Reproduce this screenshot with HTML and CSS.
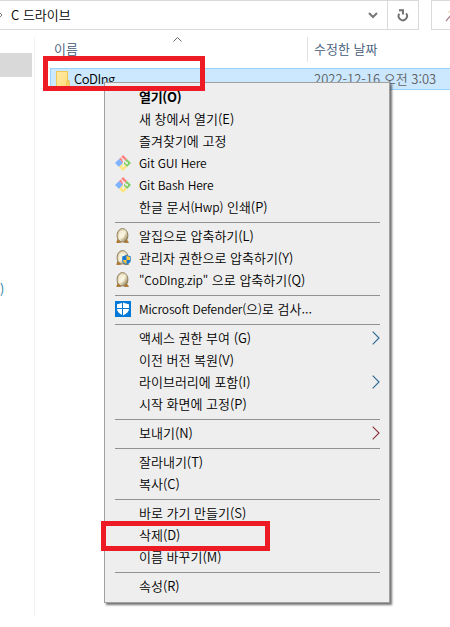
FILE: index.html
```html
<!DOCTYPE html>
<html lang="ko">
<head>
<meta charset="utf-8">
<title>C 드라이브</title>
<link rel="stylesheet" href="styles.css">
</head>
<body>
<svg class="defs" width="0" height="0">
  <defs>
    <linearGradient id="shell" x1="0" y1="0" x2="1" y2="1">
      <stop offset="0" stop-color="#c9b98f"/><stop offset=".5" stop-color="#f4ecd0"/><stop offset="1" stop-color="#7e6838"/>
    </linearGradient>
    <linearGradient id="paper" x1="0" y1="0" x2="1" y2="1">
      <stop offset="0" stop-color="#ffeba6"/><stop offset="1" stop-color="#ffdc78"/>
    </linearGradient>
    <symbol id="git" viewBox="0 0 16 16">
      <path d="M8 0l4 4-4 4-4-4z" fill="#ff8080"/>
      <path d="M12 4l4 4-4 4-4-4z" fill="#80cf63"/>
      <path d="M4 4l4 4-4 4-4-4z" fill="#80b3ff"/>
      <path d="M8 8l4 4-4 4-4-4z" fill="#ffe680"/>
      <path d="M5.500 1.800l3 3V11M8.500 5l3 3" stroke="#eee" stroke-width="1.100" fill="none"/>
      <circle cx="8.400" cy="5" r="1.100" fill="#eee"/><circle cx="11.800" cy="8" r="1.200" fill="#eee"/><circle cx="8.200" cy="11" r="1.200" fill="#eee"/>
    </symbol>
    <symbol id="egg" viewBox="0 0 16 16">
      <path d="M3 11l-1.300 3.500h4zM11 11l2.500 3.500h-4z" fill="#c87a18" stroke="#8c5a1e" stroke-width=".6"/>
      <path d="M7.500.6C10.700.6 12.900 4 12.900 7.500s-2 6.500-5.400 6.500-5.400-3-5.400-6.500S4.300.6 7.500.6z" fill="url(#shell)" stroke="#75643f" stroke-width=".8"/>
      <ellipse cx="6.800" cy="6.500" rx="3" ry="4" fill="#fffdf0" opacity=".55"/>
    </symbol>
    <symbol id="badge" viewBox="0 0 9 10">
      <path d="M4.500 0l4.300 1.500v3.500q0 3-4.300 4.800Q.2 8 .2 5V1.500z" fill="#1b78d0"/>
      <path d="M4.500 .8v4.200H8.200V2.200zM4.500 5H.8Q1.200 7.500 4.500 9.200z" fill="#ffc83a"/>
    </symbol>
    <symbol id="defender" viewBox="0 0 16 16">
      <path d="M0 0h16v16H0z" fill="#0078d7"/>
      <path d="M8 1.600q2.700 1.400 6 1.600v4.500q0 4.200-6 6.700-6-2.500-6-6.700V3.200q3.300-.2 6-1.600z" fill="#fff"/>
      <path d="M7.500 1v14M1.500 7.500h13" stroke="#0078d7"/>
    </symbol>
  </defs>
</svg>
<div class="window">
  <div class="toolbar">
    <div class="address">
      <svg class="crumb" width="3" height="8" viewBox="0 0 3 8"><path d="M-1 1l3 3-3 3" fill="none" stroke="#777"/></svg>
      <span class="path">C 드라이브</span>
      <svg class="drop" width="10" height="7" viewBox="0 0 10 7"><path d="M1 1l4 4 4-4" fill="none" stroke="#777" stroke-width="2"/></svg>
      <div class="refresh"><svg width="12" height="13" viewBox="0 0 12 13"><path d="M2.300 4.800A4.200 4.200 0 1 0 9 4.300M2 1.300h4v4.200" fill="none" stroke="#707070" stroke-width="1.900"/></svg></div>
    </div>
    <div class="search"><svg width="12" height="14" viewBox="0 0 12 14"><path d="M1 12l5-6" stroke="#ae8790" stroke-width="1.300"/><path d="M3 4q1-2 4-3" fill="none" stroke="#e8d49e"/></svg></div>
  </div>
  <div class="content">
    <div class="nav"><div class="nav-selected"></div><span class="nav-label">)</span></div>
    <div class="list">
      <div class="header"><span class="h-name">이름</span><svg class="sort" width="9" height="5" viewBox="0 0 9 5"><path d="M.5 4.500l4-4 4 4" fill="none" stroke="#666"/></svg><span class="h-date">수정한 날짜</span></div>
      <div class="file">
        <svg class="folder" width="14" height="17" viewBox="0 0 14 17"><path d="M.5.500h11v9h1.500v6.500H.5z" fill="url(#paper)" stroke="#efc857"/><path d="M11 16v-5.500q0-1 1-1t1 1V16" fill="#ffe08b" stroke="#e9bd43"/></svg>
        <span class="f-name">CoDIng</span><span class="f-date">2022-12-16 오전 3:03</span>
      </div>
    </div>
  </div>
</div>
<div class="menu">
  <div class="item bold"><span>열기(O)</span></div>
  <div class="item"><span>새 창에서 열기(E)</span></div>
  <div class="item"><span>즐겨찾기에 고정</span></div>
  <div class="item"><svg class="icon"><use href="#git"/></svg><span class="latin">Git GUI Here</span></div>
  <div class="item"><svg class="icon"><use href="#git"/></svg><span class="latin">Git Bash Here</span></div>
  <div class="item"><span>한글 문서<b class="latin">(Hwp)</b> 인쇄(P)</span></div>
  <hr>
  <div class="item"><svg class="icon"><use href="#egg"/></svg><span>알집으로 압축하기(L)</span></div>
  <div class="item"><svg class="icon"><use href="#egg"/><use href="#badge" x="7" y="5" width="9" height="10"/></svg><span>관리자 권한으로 압축하기(Y)</span></div>
  <div class="item"><svg class="icon"><use href="#egg"/></svg><span><b class="latin">"CoDIng.zip"</b> 으로 압축하기(Q)</span></div>
  <hr>
  <div class="item"><svg class="icon"><use href="#defender"/></svg><span><b class="latin">Microsoft Defender(</b>으<b class="latin">)</b>로 검사...</span></div>
  <hr>
  <div class="item"><span>액세스 권한 부여 (G)</span><svg class="arrow blue" viewBox="0 0 8 14"><path d="M.7.700L7 7 .7 13.300"/></svg></div>
  <div class="item"><span>이전 버전 복원(V)</span></div>
  <div class="item"><span>라이브러리에 포함(I)</span><svg class="arrow blue" viewBox="0 0 8 14"><path d="M.7.700L7 7 .7 13.300"/></svg></div>
  <div class="item"><span>시작 화면에 고정(P)</span></div>
  <hr>
  <div class="item"><span>보내기(N)</span><svg class="arrow" viewBox="0 0 8 14"><path d="M.7.700L7 7 .7 13.300"/></svg></div>
  <hr>
  <div class="item"><span>잘라내기(T)</span></div>
  <div class="item"><span>복사(C)</span></div>
  <hr>
  <div class="item"><span>바로 가기 만들기(S)</span></div>
  <div class="item"><span>삭제(D)</span></div>
  <div class="item"><span>이름 바꾸기(M)</span></div>
  <hr>
  <div class="item"><span>속성(R)</span></div>
</div>
<div class="mark mark-folder"></div>
<div class="mark mark-delete"></div>
</body>
</html>
```
FILE: styles.css
```css
* { box-sizing: border-box; }
body { margin: 0; width: 450px; height: 627px; overflow: hidden; position: relative; background: #fff; color: #000; font: 350 13px/22px "Noto Sans CJK KR", sans-serif; }
span { white-space: nowrap; }
svg { display: block; flex: none; }
.defs { position: absolute; }
.window { height: 617px; display: flex; flex-direction: column; }
.toolbar { display: flex; height: 30px; gap: 12px; }
.address { width: 419px; border: 1px solid #d9d9d9; border-left: 0; display: flex; align-items: center; }
.path { margin: -1px 0 0 8px; }
.drop { margin-left: auto; margin-right: 9px; }
.refresh { width: 31px; height: 28px; border-left: 1px solid #d9d9d9; display: grid; place-items: center; }
.search { flex: 1; border: 1px solid #d9d9d9; border-right: 0; padding: 8px 0 0 13px; overflow: hidden; }
.content { flex: 1; display: flex; padding-top: 7px; }
.nav { width: 35px; border-right: 1px solid #f2f2f2; padding-top: 16px; }
.nav-selected { width: 32px; height: 24px; background: #d9d9d9; }
.nav-label { display: block; margin: 201px 0 0; color: #16799b; }
.list { flex: 1; padding-left: 15px; }
.header { height: 25px; display: flex; color: #405877; position: relative; }
.h-name { padding: 1px 0 0 4px; width: 258px; border-right: 1px solid #e2e2e2; }
.h-date { padding: 1px 0 0 6px; }
.sort { position: absolute; left: 123px; top: 0; }
.file { margin-top: 6px; height: 22px; border: 1px solid #99d1ff; border-right: 0; background: #cce8ff; display: flex; align-items: center; padding-left: 5px; line-height: 20px; }
.f-name { width: 240px; margin: -1px 0 0 4px; letter-spacing: -.5px; }
.f-date { margin-top: -1px; color: #606060; letter-spacing: 0; }
.menu { position: absolute; left: 104px; top: 82px; width: 286px; height: 521px; padding: 3px 9px 0 10px; background: #eee; border: 1px solid #a0a0a0; box-shadow: 2px 2px 2px rgba(0,0,0,.55); }
.item { height: 22px; display: grid; grid-template-columns: 24px 1fr 8px; align-items: center; }
.item span { grid-column: 2; grid-row: 1; }
.item .latin { font-size: 12px; font-weight: 350; letter-spacing: -.14px; }
.icon { width: 16px; height: 16px; grid-column: 1; grid-row: 1; }
.arrow { width: 8px; height: 14px; grid-column: 3; fill: none; stroke: #8d3038; stroke-width: 1.1; }
.blue { stroke: #286995; }
.bold { font-weight: 700; letter-spacing: -.3px; }
hr { height: 1px; margin: 4px 0 2px; border: 0; background: #919191; }
.mark { position: absolute; border: 5px solid #ed1c24; }
.mark-folder { left: 43px; top: 56px; width: 162px; height: 35px; }
.mark-delete { left: 101px; top: 521px; width: 169px; height: 30px; }
```
